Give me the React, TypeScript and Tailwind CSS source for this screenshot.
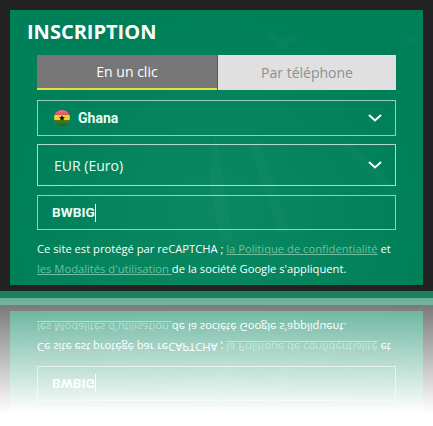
const openSans = "font-['Open_Sans',sans-serif]"

function Chevron() {
  return (
    <svg width="14" height="8" viewBox="0 0 14 8" fill="none" className="mr-[13px]">
      <path d="M1 1l6 5.5L13 1" stroke="#fff" strokeWidth="2" />
    </svg>
  )
}

function GhanaFlag() {
  return (
    <span className="relative flex h-4 w-4 items-center justify-center overflow-hidden rounded-full bg-[linear-gradient(#e8505a_0%,#e04048_34%,#efcf35_34%,#efcf35_64%,#4a8020_64%,#2a5a18_100%)]">
      <svg width="6" height="6" viewBox="0 0 10 10">
        <path d="M5 0l1.5 3.4 3.5.3-2.7 2.3.9 3.6L5 7.7 1.8 9.6l.9-3.6L0 3.7l3.5-.3z" fill="#111" />
      </svg>
      <span className="absolute inset-0 bg-[linear-gradient(rgba(255,255,255,0.22),rgba(255,255,255,0)_45%)]" />
    </span>
  )
}

/** Faint map texture behind the form. */
function Texture() {
  return (
    <svg width="413" height="275" viewBox="0 0 413 275" fill="#fff" opacity="0.018" className="absolute inset-0">
      <circle cx="262" cy="27" r="5" />
      <circle cx="272" cy="33" r="6" />
      <circle cx="283" cy="28" r="5" />
      <circle cx="400" cy="30" r="5" />
      <path d="M205 120l8 50 10 60-12 2-12-60z" />
      <path d="M250 130l30 90-10 4-32-90z" />
      <path d="M340 130l50 50-6 8-52-50z" />
    </svg>
  )
}

/** The whole page above the mirror line. Drawn twice, the second time flipped. */
function Signup() {
  return (
    <div className="flex h-[298px] flex-col bg-[#222222]">
      <div className="h-[291px] p-2.5 pb-1.5">
        <div className="relative h-[275px] bg-[radial-gradient(circle_at_50%_75%,#0a8861,#008059_70%)] pt-2">
          <Texture />
          <div className="relative">
            <h1 className={`${openSans} pl-[17px] text-[20px] leading-[27px] font-bold text-white`}>INSCRIPTION</h1>

            <div className="mx-[27px] mt-2.5 flex h-[35px] gap-px">
              <div className={`${openSans} flex w-[180px] items-center justify-center border-b-2 border-[#e6e23c] bg-[#777777] text-[14px] text-white`}>
                En un clic
              </div>
              <div className={`${openSans} flex flex-1 items-center justify-center bg-[#e0e0e0] text-[14px] text-[#8f8f8f]`}>
                Par téléphone
              </div>
            </div>

            <div className="mx-[27px] mt-2.5 flex h-9 items-center justify-between border border-white/60 pl-4">
              <div className="flex items-center gap-2">
                <GhanaFlag />
                <span className="font-['Roboto',sans-serif] text-[14px] font-bold text-[#e8fff6]">Ghana</span>
              </div>
              <Chevron />
            </div>

            <div className="mx-[27px] mt-2 flex h-[42px] items-center justify-between border border-white/70 pl-4">
              <span className={`${openSans} text-[14px] text-[#e8fff6]`}>EUR (Euro)</span>
              <Chevron />
            </div>

            <div className="mx-[27px] mt-[9px] flex h-[35px] items-center border border-white/60 pl-[14px]">
              <span className="font-['Roboto',sans-serif] text-[13.7px] font-bold text-[#e8fff6]">BWBIG</span>
              <span className="h-[18px] w-px bg-white" />
            </div>

            <p className={`${openSans} mx-[27px] mt-[9px] text-[11.2px] leading-5 whitespace-nowrap text-white`}>
              Ce site est protégé par reCAPTCHA ; <span className="text-[#6cc0a0] underline">la Politique de confidentialité</span> et
              <br />
              <span className="text-[#6cc0a0] underline">les Modalités d'utilisation </span>de la société Google s'appliquent.
            </p>
          </div>
        </div>
      </div>
      <div className="h-[7px] bg-[#1a8060]" />
    </div>
  )
}

export default function App() {
  return (
    <div className="h-[426px] overflow-hidden bg-white">
      <Signup />
      <div aria-hidden="true" className="relative h-[128px] overflow-hidden">
        <div className="-scale-y-100">
          <Signup />
        </div>
        <div className="absolute inset-0 bg-[linear-gradient(rgba(255,255,255,0.36),rgba(255,255,255,1)_90%)]" />
      </div>
    </div>
  )
}
